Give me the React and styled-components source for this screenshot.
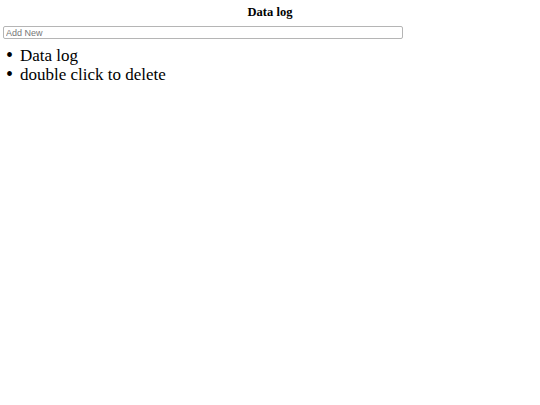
import React, { useState } from "react";
import styled, { createGlobalStyle } from "styled-components";

const GlobalStyle = createGlobalStyle`
  body {
    margin: 0;
    background: #fff;
    font-family: "Liberation Serif", "Times New Roman", serif;
    color: #000;
  }
`;

const Page = styled.div`
  padding: 5px 3px;
`;

const Title = styled.h1`
  margin: 0 0 6px;
  font-size: 12.5px;
  font-weight: bold;
  text-align: center;
  line-height: 15px;
`;

const AddInput = styled.input`
  display: block;
  box-sizing: border-box;
  width: 400px;
  height: 13px;
  margin: 0;
  padding: 0 2px;
  border: 1px solid #b5b5b5;
  border-radius: 2px;
  font-family: "Liberation Sans", Arial, sans-serif;
  font-size: 9px;
  outline: none;
  &::placeholder {
    color: #767676;
  }
`;

const List = styled.ul`
  margin: 7px 0 0;
  padding-left: 17px;
  list-style: none;
  font-size: 17px;
  line-height: 19px;
`;

const Item = styled.li`
  cursor: pointer;
  &::before {
    content: "\\2022";
    display: inline-block;
    width: 14px;
    margin-left: -14px;
    font-size: 20px;
    line-height: 19px;
    vertical-align: top;
  }
`;

const App = () => {
  const [items, setItems] = useState(["Data log", "double click to delete"]);
  const [text, setText] = useState("");

  const addItem = (e) => {
    if (e.key === "Enter" && text.trim()) {
      setItems([...items, text.trim()]);
      setText("");
    }
  };

  return (
    <Page>
      <GlobalStyle />
      <Title>Data log</Title>
      <AddInput
        placeholder="Add New"
        value={text}
        onChange={(e) => setText(e.target.value)}
        onKeyDown={addItem}
      />
      <List>
        {items.map((item, i) => (
          <Item key={i} onDoubleClick={() => setItems(items.filter((_, j) => j !== i))}>
            {item}
          </Item>
        ))}
      </List>
    </Page>
  );
};

export default App;
